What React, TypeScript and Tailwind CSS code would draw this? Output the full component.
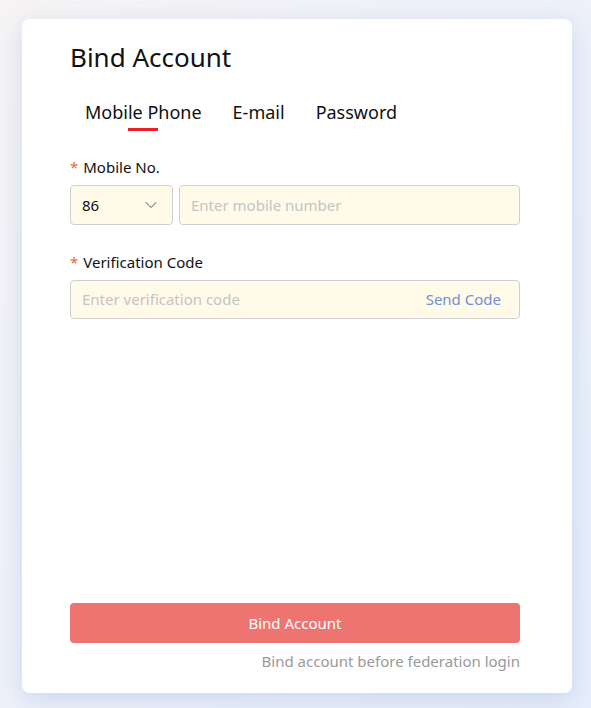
import { ChevronDown } from "lucide-react";

const font = { fontFamily: '"Noto Sans", "Open Sans", sans-serif' };

function Tab({ label, active }: { label: string; active?: boolean }) {
  return (
    <div className="relative px-[15px] pb-[7px] text-[18px] leading-[24px] text-[#111]">
      {label}
      {active && <div className="absolute bottom-0 left-1/2 h-[3px] w-[30px] -translate-x-1/2 bg-[#e8202a]" />}
    </div>
  );
}

function Label({ text }: { text: string }) {
  return (
    <div className="flex items-center gap-[5px] text-[15px] leading-[20px] text-[#111]">
      <span className="text-[#f0643c]">*</span>
      {text}
    </div>
  );
}

export default function App() {
  return (
    <div
      className="h-[708px] w-[591px] overflow-hidden bg-gradient-to-br from-[#f7f4f4] via-[#eef1fa] to-[#e7eefb] pl-[22px] pt-[19px]"
      style={font}
    >
      <div className="flex h-[674px] w-[550px] flex-col rounded-lg bg-white pb-[22px] pl-[48px] pr-[52px] pt-[21px] shadow-[0_6px_24px_rgba(160,185,225,0.45)]">
        <h1 className="text-[26px] leading-[34px] text-[#111]">Bind Account</h1>

        <div className="mt-[26px] flex gap-[1px]">
          <Tab label="Mobile Phone" active />
          <Tab label="E-mail" />
          <Tab label="Password" />
        </div>

        <div className="mt-[26px]">
          <Label text="Mobile No." />
          <div className="mt-[8px] flex gap-[6px]">
            <div className="flex h-[40px] w-[103px] items-center justify-between rounded-[4px] border border-[#cfcfcf] bg-[#fffbe8] pl-[11px] pr-[11px] text-[15px] text-[#111]">
              86
              <ChevronDown className="h-[20px] w-[20px] text-[#999]" strokeWidth={1.3} />
            </div>
            <div className="flex h-[40px] flex-1 items-center rounded-[4px] border border-[#cfcfcf] bg-[#fffbe8] px-[11px] text-[15px] text-[#c4c4c4]">
              Enter mobile number
            </div>
          </div>
        </div>

        <div className="mt-[27px]">
          <Label text="Verification Code" />
          <div className="mt-[8px] flex h-[39px] items-center justify-between rounded-[4px] border border-[#cfcfcf] bg-[#fffbe8] px-[11px] pr-[18px] text-[15px]">
            <span className="text-[#c4c4c4]">Enter verification code</span>
            <span className="text-[#6f8fdc]">Send Code</span>
          </div>
        </div>

        <div className="mt-auto">
          <div className="flex h-[40px] items-center justify-center rounded-[4px] bg-[#ee7471] text-[15px] text-white">
            Bind Account
          </div>
          <div className="mt-[8px] text-right text-[15px] leading-[20px] text-[#999]">
            Bind account before federation login
          </div>
        </div>
      </div>
    </div>
  );
}
